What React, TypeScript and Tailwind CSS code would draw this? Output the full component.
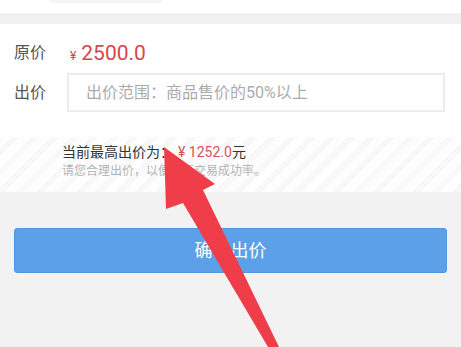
export default function App() {
  return (
    <div
      className="relative w-[461px] h-[347px] overflow-hidden bg-[#f2f2f2]"
      style={{ fontFamily: 'Roboto, "Noto Sans CJK SC", "Noto Sans", sans-serif' }}
    >
      {/* top cut-off area */}
      <div className="h-[13px] bg-white">
        <div className="ml-[50px] w-[112px] h-[3px] rounded-b bg-[#f4f4f4]" />
      </div>
      <div className="h-[11px] bg-[#f0f0f0]" />

      {/* price form */}
      <div className="bg-white pt-[16px] pb-[25px]">
        <div className="flex items-center h-[26px] pl-[14px]">
          <span className="w-[56px] text-[16px] text-[#555]">原价</span>
          <span className="flex items-baseline gap-[5px] text-[#d6464d] leading-none">
            <span className="text-[12px]">¥</span>
            <span className="text-[21px]">2500.0</span>
          </span>
        </div>
        <div className="flex items-center mt-[7px] pl-[14px] pr-[16px]">
          <span className="w-[53px] text-[16px] text-[#555]">出价</span>
          <input
            className="flex-1 h-[39px] border-2 border-[#ececec] pl-[17px] text-[16px] outline-none placeholder:text-[#ababab]"
            placeholder="出价范围：商品售价的50%以上"
          />
        </div>
      </div>

      {/* current highest bid */}
      <div className="h-[55px] pl-[62px] pt-[5px] bg-[repeating-linear-gradient(135deg,#fefefe_0px,#fefefe_8px,#f8f8f8_8px,#f8f8f8_14px)]">
        <div className="text-[14px] leading-[20px] text-[#333]">
          当前最高出价为：
          <span className="ml-[4px] text-[#d6535b]">¥ 1252.0</span>元
        </div>
        <div className="mt-[1px] text-[12px] leading-[16px] text-[#b3b3b3]">
          请您合理出价，以便提高交易成功率。
        </div>
      </div>

      {/* confirm */}
      <div className="px-[14px] pt-[36px]">
        <button className="w-full h-[45px] rounded-[3px] bg-[#5ca0e9] border border-[#5196e2] text-white text-[18px]">
          确认出价
        </button>
      </div>

      {/* red annotation arrow */}
      <svg className="absolute left-0 top-0" width="461" height="347" viewBox="0 0 461 347">
        <polygon
          points="164,147 215,184 203,190 279,347 268,347 183,203 166,209"
          fill="#ef3e49"
        />
      </svg>
    </div>
  );
}
